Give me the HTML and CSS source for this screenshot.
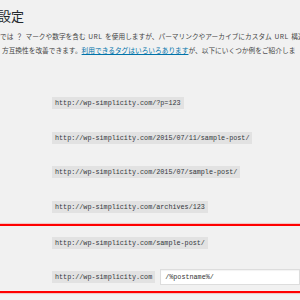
FILE: index.html
```html
<!DOCTYPE html>
<html lang="ja">
<head>
<meta charset="UTF-8">
<meta name="viewport" content="width=device-width, initial-scale=1.0">
<title>パーマリンク設定</title>
<link rel="stylesheet" href="styles.css">
</head>
<body>

<div class="wrap">
    <h1>設定</h1>
    <p class="intro">
        <span class="line line-1">では ？ マークや数字を含む <span class="abbr">URL</span> を使用しますが、パーマリンクやアーカイブにカスタム <span class="abbr">URL</span> 構造</span>
        <span class="line line-2">方互換性を改善できます。<a href="#">利用できるタグはいろいろあります</a>が、以下にいくつか例をご紹介しま</span>
    </p>

    <div class="rows">
        <div class="row"><code>http://wp-simplicity.com/?p=123</code></div>
        <div class="row"><code>http://wp-simplicity.com/2015/07/11/sample-post/</code></div>
        <div class="row"><code>http://wp-simplicity.com/2015/07/sample-post/</code></div>
        <div class="row"><code>http://wp-simplicity.com/archives/123</code></div>
    </div>

    <!-- 赤枠で囲んだ部分 -->
    <div class="marked">
        <div class="row row-post"><code>http://wp-simplicity.com/sample-post/</code></div>
        <div class="row row-custom">
            <code>http://wp-simplicity.com</code>
            <input type="text" class="custom" value="/%postname%/">
        </div>
    </div>
</div>

</body>
</html>
```

FILE: styles.css
```css
body {
  margin: 0;
  background-color: #f1f1f1;
  color: #444;
  font-family: "Noto Sans CJK JP", "Noto Sans", sans-serif;
  overflow: hidden;
}
.wrap {
  width: 300px;
  height: 300px;
  overflow: hidden;
}
h1 {
  margin: 0 0 0 -2px;
  padding-top: 8px;
  font-size: 13px;
  line-height: 16px;
  font-weight: 400;
  color: #23282d;
}
.intro {
  margin: 6px 0 0;
  font-size: 6.7px;
  line-height: 13.5px;
}
.line {
  display: block;
  white-space: nowrap;
}
.line-1 {
  word-spacing: 1.2px;
}
.line-1 .abbr {
  letter-spacing: 0.45px;
}
.line-2 {
  margin-left: 2px;
}
.intro a {
  color: #0073aa;
  text-decoration: underline;
}
.rows {
  margin-top: 29px;
}
.row {
  display: flex;
  align-items: center;
  height: 34.5px;
  padding-left: 52px;
}
code {
  display: inline-block;
  padding: 0 3px;
  background: #e2e2e2;
  color: #32373c;
  font-family: "Liberation Mono", monospace;
  font-size: 6.76px;
  line-height: 12px;
  white-space: nowrap;
}
.marked {
  margin: 0 -10px;
  padding: 0 10px;
  border-top: 2px solid #f00;
  border-bottom: 2px solid #f00;
  box-shadow: 0 0 1.5px rgba(255, 0, 0, 0.7);
}
.row-post {
  height: 33px;
}
.row-custom {
  height: auto;
  padding-top: 10px;
  padding-bottom: 6px;
  gap: 5px;
}
input.custom {
  box-sizing: border-box;
  width: 200px;
  height: 16px;
  margin: 0;
  padding: 0 4px;
  border: 1px solid #ddd;
  box-shadow: inset 0 1px 1px rgba(0, 0, 0, 0.05);
  background: #fff;
  color: #333;
  font-family: "Liberation Mono", monospace;
  font-size: 6.76px;
}
```
